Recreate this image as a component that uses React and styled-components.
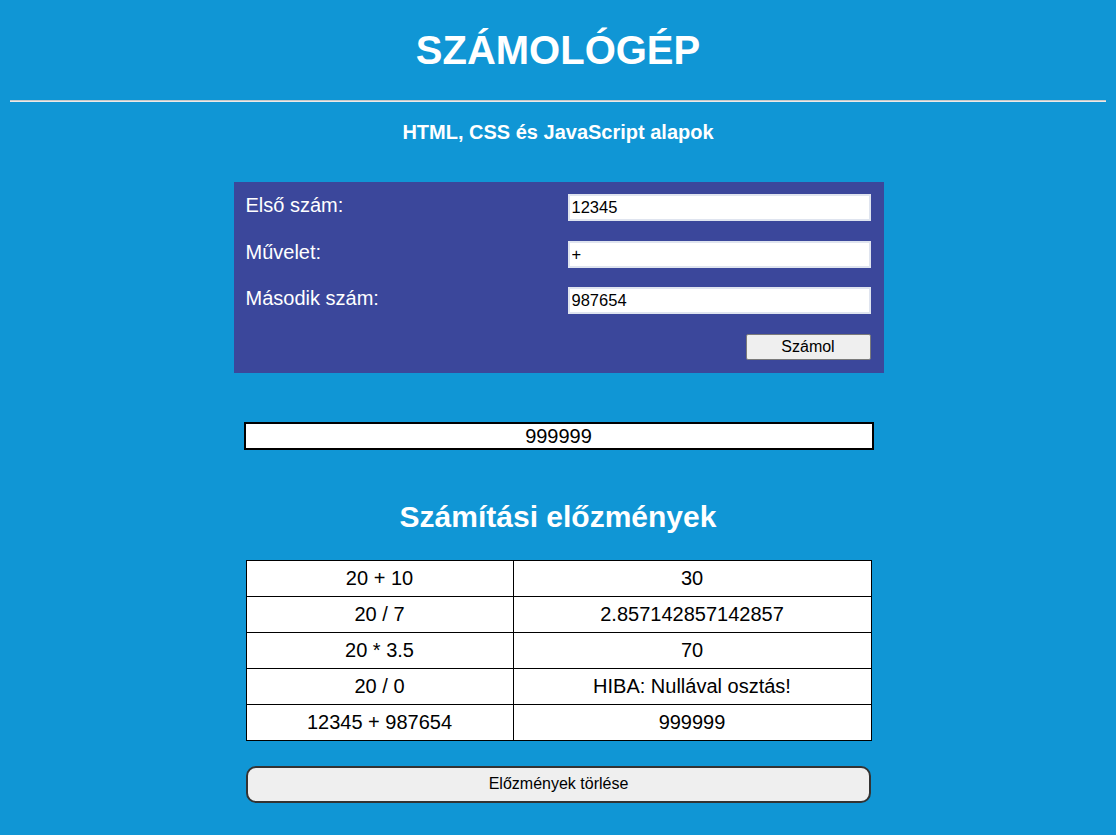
import React, { useState } from "react";
import styled, { createGlobalStyle } from "styled-components";

const GlobalStyle = createGlobalStyle`
  html, body {
    margin: 0;
    padding: 0;
    background-color: #1096d5;
    font-family: "Liberation Sans", Arial, sans-serif;
  }
`;

const history = [
  { expr: "20 + 10", result: "30" },
  { expr: "20 / 7", result: "2.857142857142857" },
  { expr: "20 * 3.5", result: "70" },
  { expr: "20 / 0", result: "HIBA: Nullával osztás!" },
  { expr: "12345 + 987654", result: "999999" },
];

function App() {
  const [first, setFirst] = useState("12345");
  const [op, setOp] = useState("+");
  const [second, setSecond] = useState("987654");

  return (
    <>
      <GlobalStyle />
      <Page>
        <Title>SZÁMOLÓGÉP</Title>
        <Divider />
        <Subtitle>HTML, CSS és JavaScript alapok</Subtitle>

        <Panel>
          <Label>Első szám:</Label>
          <Input value={first} onChange={(e) => setFirst(e.target.value)} />
          <Label>Művelet:</Label>
          <Input value={op} onChange={(e) => setOp(e.target.value)} />
          <Label>Második szám:</Label>
          <Input value={second} onChange={(e) => setSecond(e.target.value)} />
          <CalcButton>Számol</CalcButton>
        </Panel>

        <Result>999999</Result>

        <HistoryTitle>Számítási előzmények</HistoryTitle>

        <HistoryTable>
          <tbody>
            {history.map((row, index) => (
              <tr key={index}>
                <Cell $first>{row.expr}</Cell>
                <Cell>{row.result}</Cell>
              </tr>
            ))}
          </tbody>
        </HistoryTable>

        <ClearButton>Előzmények törlése</ClearButton>
      </Page>
    </>
  );
}

const Page = styled.div`
  display: flex;
  flex-direction: column;
  align-items: center;
  padding-bottom: 30px;
  color: #fff;
`;

const Title = styled.h1`
  margin: 27px 0 0;
  font-size: 40px;
  line-height: 46px;
  font-weight: bold;
`;

const Divider = styled.hr`
  align-self: stretch;
  margin: 27px 10px 0;
  height: 0;
  border: none;
  border-top: 1px solid #c9c9c9;
  border-bottom: 1px solid #eaeaea;
`;

const Subtitle = styled.h3`
  margin: 19px 0 0;
  font-size: 20px;
  line-height: 23px;
  font-weight: bold;
`;

const Panel = styled.div`
  box-sizing: border-box;
  width: 650px;
  margin: 38px 0 0 1px;
  padding: 12px 13px 13px 12px;
  background-color: #3b479b;
  display: grid;
  grid-template-columns: 1fr 303px;
  row-gap: 19.5px;
  align-items: start;
`;

const Label = styled.label`
  font-size: 20px;
  line-height: 23px;
  color: #fff;
`;

const Input = styled.input`
  box-sizing: border-box;
  width: 303px;
  height: 27px;
  margin: 0;
  padding: 0 2px;
  border: 2px solid #dfe4ef;
  background: #fff;
  color: #000;
  font-family: "Liberation Sans", Arial, sans-serif;
  font-size: 16.5px;
  outline: none;
`;

const CalcButton = styled.button`
  grid-column: 2;
  justify-self: end;
  box-sizing: border-box;
  width: 125px;
  height: 26px;
  margin: 0;
  padding: 0;
  border: 1px solid #7a7a7a;
  border-radius: 2px;
  background-color: #efefef;
  color: #000;
  font-family: "Liberation Sans", Arial, sans-serif;
  font-size: 16px;
`;

const Result = styled.div`
  box-sizing: border-box;
  width: 630px;
  height: 28px;
  margin: 49px 0 0 1px;
  border: 2px solid #000;
  background: #fff;
  color: #000;
  font-size: 20px;
  line-height: 24px;
  text-align: center;
`;

const HistoryTitle = styled.h2`
  margin: 50px 0 0;
  font-size: 30px;
  line-height: 34px;
  font-weight: bold;
`;

const HistoryTable = styled.table`
  width: 626px;
  margin: 26px 0 0 1px;
  border-collapse: collapse;
  background: #fff;
  color: #000;
  table-layout: fixed;
`;

const Cell = styled.td`
  width: ${(p) => (p.$first ? "266px" : "auto")};
  height: 35px;
  padding: 0;
  border: 1px solid #000;
  font-size: 20px;
  line-height: 23px;
  text-align: center;
`;

const ClearButton = styled.button`
  box-sizing: border-box;
  width: 625px;
  height: 37px;
  margin: 25px 0 0 1px;
  border: 2px solid #333;
  border-radius: 10px;
  background-color: #efefef;
  color: #000;
  font-family: "Liberation Sans", Arial, sans-serif;
  font-size: 16px;
`;

export default App;
